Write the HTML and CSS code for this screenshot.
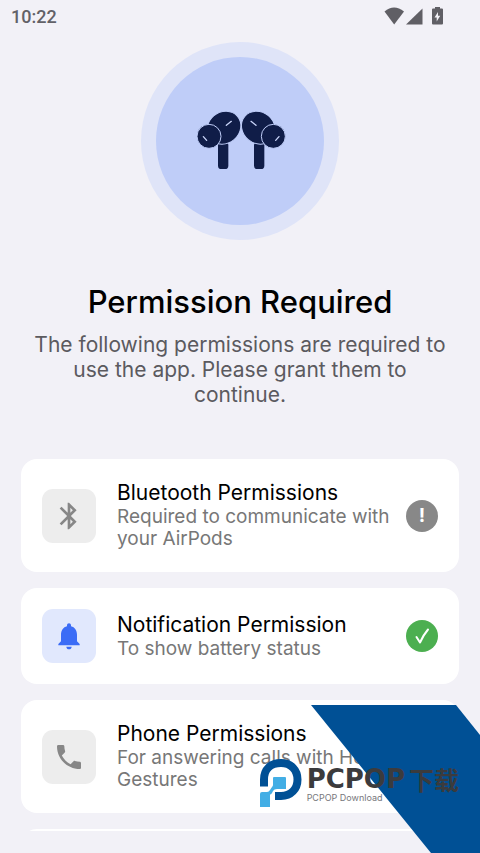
FILE: index.html
```html
<!DOCTYPE html>
<html lang="en">
<head>
<meta charset="utf-8">
<meta name="viewport" content="width=device-width, initial-scale=1">
<title>Permission Required</title>
<link rel="stylesheet" href="styles.css">
</head>
<body>
<div class="screen">
  <header class="status-bar">
    <time class="clock">10:22</time>
    <svg class="system-icons" viewBox="0 0 62 20" aria-hidden="true">
      <path d="M0.500 4.500Q10-3.500 20 4.500L10.200 17.500Z"/>
      <path d="M22 17.500L38.500 1.500V17.500Z"/>
      <path fill-rule="evenodd" d="M51 0h5v1.500h2q1 0 1 1V16.500q0 1-1 1h-9q-1 0-1-1V2.500q0-1 1-1h2ZM54 5l-3.500 5.500h2.200V14.500l3.500-5.700h-2.200Z"/>
    </svg>
  </header>
  <main class="content">
    <div class="hero">
      <div class="hero-disc">
        <svg class="earbuds" viewBox="0 3 360 270" aria-hidden="true">
          <g id="bud">
            <rect x="114" y="140" width="31" height="82" rx="10"/>
            <ellipse class="cut" cx="132" cy="98" rx="53" ry="47" transform="rotate(-40 132 98)"/>
            <circle class="cut" cx="87" cy="124" r="36"/>
            <path class="slit" d="M139 91L154 79M70 125L80 136"/>
          </g>
          <use href="#bud" transform="translate(367 0) scale(-1 1)"/>
        </svg>
      </div>
    </div>
    <h1 class="title">Permission Required</h1>
    <p class="intro">The following permissions are required to use the app. Please grant them to continue.</p>
    <ul class="cards">
      <li class="card">
        <span class="tile">
          <svg viewBox="0 0 24 24" aria-hidden="true"><path d="M17.710 7.710L12 2h-1v7.590L6.410 5 5 6.410 10.590 12 5 17.590 6.410 19 11 14.410V22h1l5.710-5.710-4.300-4.290 4.300-4.290zM13 5.830l1.880 1.880L13 9.590V5.830zm1.880 10.460L13 18.170v-3.760l1.880 1.880z"/></svg>
        </span>
        <div class="card-text">
          <h2>Bluetooth Permissions</h2>
          <p>Required to communicate with your AirPods</p>
        </div>
        <span class="state">!</span>
      </li>
      <li class="card">
        <span class="tile tile-on">
          <svg viewBox="0 0 24 24" aria-hidden="true"><path d="M12 22c1.100 0 2-.9 2-2h-4c0 1.100.9 2 2 2zm6-6v-5c0-3.070-1.640-5.640-4.500-6.320V4c0-.83-.67-1.500-1.500-1.500s-1.500.67-1.500 1.500v.68C7.630 5.360 6 7.920 6 11v5l-2 2v1h16v-1l-2-2z"/></svg>
        </span>
        <div class="card-text">
          <h2>Notification Permission</h2>
          <p>To show battery status</p>
        </div>
        <span class="state state-ok">
          <svg viewBox="0 0 32 32" aria-hidden="true"><path d="M10.500 17L14 22.500Q17 15.500 22 9.500"/></svg>
        </span>
      </li>
      <li class="card">
        <span class="tile">
          <svg viewBox="0 0 24 24" aria-hidden="true"><path d="M7.500 3H4c-.55 0-1 .45-1 1 0 9.390 7.610 17 17 17 .55 0 1-.45 1-1v-3.490c0-.55-.45-1-1-1-1.240 0-2.450-.2-3.570-.57-.1-.04-.21-.05-.31-.05-.26 0-.51.1-.71.29l-2.200 2.200c-2.830-1.450-5.150-3.760-6.590-6.590l2.200-2.200c.28-.28.36-.67.25-1.020C8.700 6.450 8.500 5.250 8.500 4c0-.55-.45-1-1-1z"/></svg>
        </span>
        <div class="card-text">
          <h2>Phone Permissions</h2>
          <p>For answering calls with Head Gestures</p>
        </div>
        <span class="state">!</span>
      </li>
      <li class="card"></li>
    </ul>
  </main>
  <aside class="watermark">
    <svg class="ribbon" viewBox="0 0 170 148" aria-hidden="true"><path d="M1 0H146L170 30V148H121Z"/></svg>
    <div class="brand">
      <svg class="brand-mark" viewBox="0 0 44 50" aria-hidden="true">
        <path class="arc" d="M5 28.500V21.500C5 11 12 5 22 5S38.500 12 38.500 21.500S32 38 22 38H16"/>
        <path class="pixel" d="M15 19h11q1 0 1 1v11h-9q-3 0-4 2l-1 2q-1 1.500-2 1.500V49H1V36q0-2 2-2h5q2 0 3-2l2-3q1-1 1-2v-7q0-1 1-1Z"/>
      </svg>
      <div class="brand-text">
        <span class="brand-name">PCPOP<span class="brand-cjk" lang="zh">下载</span></span>
        <span class="brand-sub">PCPOP Download</span>
      </div>
    </div>
  </aside>
</div>
</body>
</html>
```
FILE: styles.css
```css
* {
  box-sizing: border-box;
}

body,
h1,
h2,
p,
ul {
  margin: 0;
  padding: 0;
}

body {
  background: #f2f1f7;
  color: #000;
  font-family: Inter, "Noto Sans", sans-serif;
}

.screen {
  position: relative;
  display: flex;
  flex-direction: column;
  height: 100vh;
  overflow: hidden;
}

.status-bar {
  display: flex;
  flex: none;
  align-items: center;
  justify-content: space-between;
  height: 34px;
  padding: 0 34px 0 11px;
}

.clock {
  color: #626167;
  font: 500 18px/24px Roboto, sans-serif;
}

.system-icons {
  width: 62px;
  height: 20px;
  fill: #605f65;
}

.content {
  display: flex;
  flex: 1;
  flex-direction: column;
  min-height: 0;
  padding: 8px 21px 22px;
}

.hero {
  display: flex;
  flex: none;
  align-self: center;
  padding: 15px;
  border-radius: 50%;
  background: #dfe4f8;
}

.hero-disc {
  display: flex;
  align-items: center;
  justify-content: center;
  width: 168px;
  height: 168px;
  border-radius: 50%;
  background: #bfcdf8;
}

.earbuds {
  width: 120px;
  height: 90px;
  fill: #101d48;
}

.cut {
  stroke: #bfcdf8;
  stroke-width: 3;
}

.slit {
  fill: none;
  stroke: #cbd6fa;
  stroke-width: 4;
  stroke-linecap: round;
}

.title {
  margin-top: 42px;
  text-align: center;
  font-size: 31px;
  font-weight: 500;
  line-height: 40px;
}

.intro {
  margin-top: 10px;
  padding: 0 8px;
  color: #5b5a5f;
  text-align: center;
  font-size: 21px;
  line-height: 25px;
}

.cards {
  display: flex;
  flex: 1;
  flex-direction: column;
  gap: 16px;
  min-height: 0;
  margin-top: 52px;
  overflow: hidden;
  list-style: none;
}

.card {
  display: flex;
  flex: none;
  align-items: center;
  gap: 14px;
  min-height: 96px;
  padding: 21px;
  border-radius: 16px;
  background: #fff;
}

.tile {
  display: flex;
  flex: none;
  align-items: center;
  justify-content: center;
  width: 54px;
  height: 54px;
  margin-right: 7px;
  border-radius: 11px;
  background: #ededed;
}

.tile svg {
  width: 32px;
  height: 32px;
  fill: #878787;
}

.tile-on {
  background: #e1e8fd;
}

.tile-on svg {
  fill: #3b6cf6;
}

.card-text {
  flex: 1;
  min-width: 0;
}

.card-text h2 {
  font-size: 21px;
  font-weight: 400;
  line-height: 26px;
}

.card-text p {
  padding-bottom: 1px;
  color: #777;
  font-size: 19px;
  line-height: 22px;
}

.state {
  display: flex;
  flex: none;
  align-items: center;
  justify-content: center;
  width: 32px;
  height: 32px;
  border-radius: 50%;
  background: #888;
  color: #fff;
  font-size: 19px;
  font-weight: 700;
  line-height: 24px;
}

.state-ok {
  background: #4caf50;
}

.state-ok svg {
  width: 32px;
  height: 32px;
  fill: none;
  stroke: #fff;
  stroke-width: 2;
  stroke-linecap: round;
  stroke-linejoin: round;
}

/* Brand overlay pinned to the bottom corner */
.watermark {
  position: absolute;
  right: 0;
  bottom: 0;
}

.ribbon {
  display: block;
  width: 170px;
  height: 148px;
  fill: #005095;
}

.brand {
  position: absolute;
  right: 21px;
  bottom: 45px;
  display: flex;
  align-items: flex-end;
  gap: 4px;
}

.brand-mark {
  flex: none;
  width: 44px;
  height: 50px;
}

.arc {
  fill: none;
  stroke: #005095;
  stroke-width: 8;
}

.pixel {
  fill: #42aee5;
}

.brand-text {
  display: flex;
  flex-direction: column;
  white-space: nowrap;
}

.brand-name {
  display: flex;
  align-items: center;
  gap: 4px;
  color: #3b3b3d;
  font: 700 26px/26px "DejaVu Sans", sans-serif;
}

.brand-cjk {
  font: 700 25px/26px "Noto Sans CJK SC", sans-serif;
}

.brand-sub {
  padding-bottom: 4px;
  color: #77777b;
  font-size: 9px;
  line-height: 12px;
}
```
